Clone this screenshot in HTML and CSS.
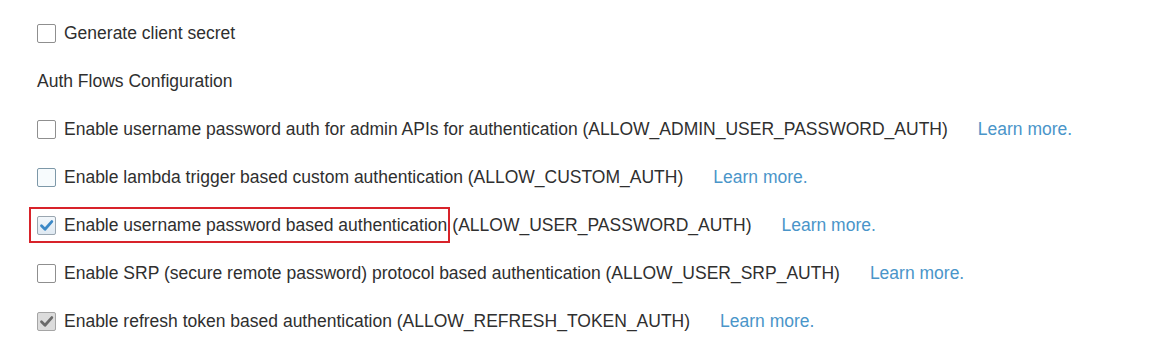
FILE: index.html
```html
<!DOCTYPE html>
<html lang="en">
<head>
<meta charset="UTF-8">
<title>App client settings</title>
<link rel="stylesheet" href="styles.css">
</head>
<body>

<div class="settings">

<div class="row">
<span class="box"></span>
<span class="label">Generate client secret</span>
</div>

<div class="row heading">Auth Flows Configuration</div>

<div class="row">
<span class="box"></span>
<span class="label">Enable username password auth for admin APIs for authentication (ALLOW_ADMIN_USER_PASSWORD_AUTH)</span>
<a class="learn" href="#">Learn more.</a>
</div>

<div class="row">
<span class="box focus"></span>
<span class="label">Enable lambda trigger based custom authentication (ALLOW_CUSTOM_AUTH)</span>
<a class="learn" href="#">Learn more.</a>
</div>

<div class="row">
<span class="highlight">
<span class="box checked">
<svg viewBox="0 0 19 19" width="19" height="19"><path d="M4.5 9.8 L8 13.2 L14.8 5.6" fill="none" stroke="#3b88c6" stroke-width="2.8" stroke-linecap="round" stroke-linejoin="round"/></svg>
</span>
<span class="label">Enable username password based authentication</span>
</span>
<span class="label rest">(ALLOW_USER_PASSWORD_AUTH)</span>
<a class="learn" href="#">Learn more.</a>
</div>

<div class="row">
<span class="box"></span>
<span class="label">Enable SRP (secure remote password) protocol based authentication (ALLOW_USER_SRP_AUTH)</span>
<a class="learn" href="#">Learn more.</a>
</div>

<div class="row">
<span class="box disabled">
<svg viewBox="0 0 19 19" width="19" height="19"><path d="M4.5 9.8 L8 13.2 L14.8 5.6" fill="none" stroke="#6a6a6a" stroke-width="2.8" stroke-linecap="round" stroke-linejoin="round"/></svg>
</span>
<span class="label">Enable refresh token based authentication (ALLOW_REFRESH_TOKEN_AUTH)</span>
<a class="learn" href="#">Learn more.</a>
</div>

</div>

</body>
</html>
```

FILE: styles.css
```css
* {
margin: 0;
padding: 0;
box-sizing: border-box;
}

body {
background: #fff;
color: #2f2f2f;
font-family: "Liberation Sans", Arial, sans-serif;
font-size: 17.5px;
}

.settings {
padding: 9px 0 0 37px;
}

.row {
display: flex;
align-items: center;
height: 48px;
white-space: nowrap;
}

.heading {
color: #2f2f2f;
}

/* Checkboxes */
.box {
width: 19px;
height: 19px;
border: 1px solid #8f8f8f;
border-radius: 2px;
background: #fff;
margin-right: 8px;
flex-shrink: 0;
display: flex;
align-items: center;
justify-content: center;
}

.box svg {
display: block;
margin: -1px;
}

.box.focus {
border-color: #7d98a8;
background: #f7fbfd;
}

.box.checked {
border-color: #9aa6b0;
background: linear-gradient(#f2f7fb, #dfe9f2);
}

.box.disabled {
border-color: #a5a5a5;
background: #dcdcdc;
}

.label {
color: #2f2f2f;
}

.rest {
margin-left: 2px;
}

.learn {
color: #4a95c9;
text-decoration: none;
margin-left: 30px;
}

/* Red annotation box */
.highlight {
display: flex;
align-items: center;
height: 36px;
margin-left: -8px;
padding-left: 6px;
padding-right: 1px;
border: 2px solid #d8232a;
}
```
